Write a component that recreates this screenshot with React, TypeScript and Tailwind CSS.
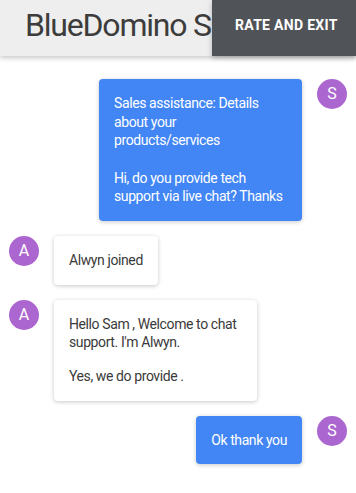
const messages = [
  {
    from: "S",
    side: "right",
    paras: [
      [
        "Sales assistance: Details",
        "about your",
        "products/services",
        "",
        "Hi, do you provide tech",
        "support via live chat? Thanks",
      ],
    ],
  },
  { from: "A", side: "left", paras: [["Alwyn joined"]] },
  {
    from: "A",
    side: "left",
    paras: [["Hello Sam , Welcome to chat", "support. I'm Alwyn."], ["Yes, we do provide ."]],
  },
  { from: "S", side: "right", paras: [["Ok thank you"]] },
];

function Avatar({ letter }: { letter: string }) {
  return (
    <div className="flex h-[30px] w-[30px] shrink-0 items-center justify-center rounded-full bg-[#ab66d0] text-[16px] leading-none text-white">
      {letter}
    </div>
  );
}

export default function App() {
  return (
    <div
      className="relative h-[493px] w-[356px] overflow-hidden bg-white"
      style={{ fontFamily: "Roboto, 'Liberation Sans', sans-serif" }}
    >
      <header className="relative z-10 flex h-[56px] bg-[#eeeeee] shadow-[0_2px_5px_rgba(0,0,0,0.22)]">
        <h1 className="w-[212px] shrink-0 overflow-hidden whitespace-nowrap pl-[25px] text-[32px] leading-[50px] font-normal tracking-[-1.2px] text-[#3c3c3c]">
          BlueDomino Support
        </h1>
        <button
          type="button"
          className="flex h-[56px] w-[144px] shrink-0 items-center pb-[5px] pl-[23px] text-[14px] font-bold tracking-[0.3px] whitespace-nowrap text-white bg-[#505459] shadow-[0_2px_5px_rgba(0,0,0,0.25)]"
        >
          RATE AND EXIT
        </button>
      </header>

      <main className="flex flex-col gap-[15px] px-[9px] pt-[23px]">
        {messages.map((m, i) => {
          const mine = m.side === "right";
          return (
            <div
              key={i}
              className={`flex items-start gap-[15px] ${mine ? "flex-row-reverse" : ""}`}
            >
              <Avatar letter={m.from} />
              <div
                className={`min-w-0 rounded-[4px] px-[15px] py-[15px] text-[14px] leading-[18.67px] tracking-[-0.4px] whitespace-nowrap shadow-[0_1px_4px_rgba(0,0,0,0.22)] ${
                  mine ? "bg-[#4286f5] text-white" : "bg-white text-[#3a3a3a]"
                } ${m.paras[0].length > 1 ? "w-[203px]" : ""}`}
              >
                {m.paras.map((lines, j) => (
                  <p key={j} className={j > 0 ? "mt-[15px]" : ""}>
                    {lines.map((l, k) => (
                      <span key={k} className="block">
                        {l === "" ? "\u00a0" : l}
                      </span>
                    ))}
                  </p>
                ))}
              </div>
            </div>
          );
        })}
      </main>
    </div>
  );
}
